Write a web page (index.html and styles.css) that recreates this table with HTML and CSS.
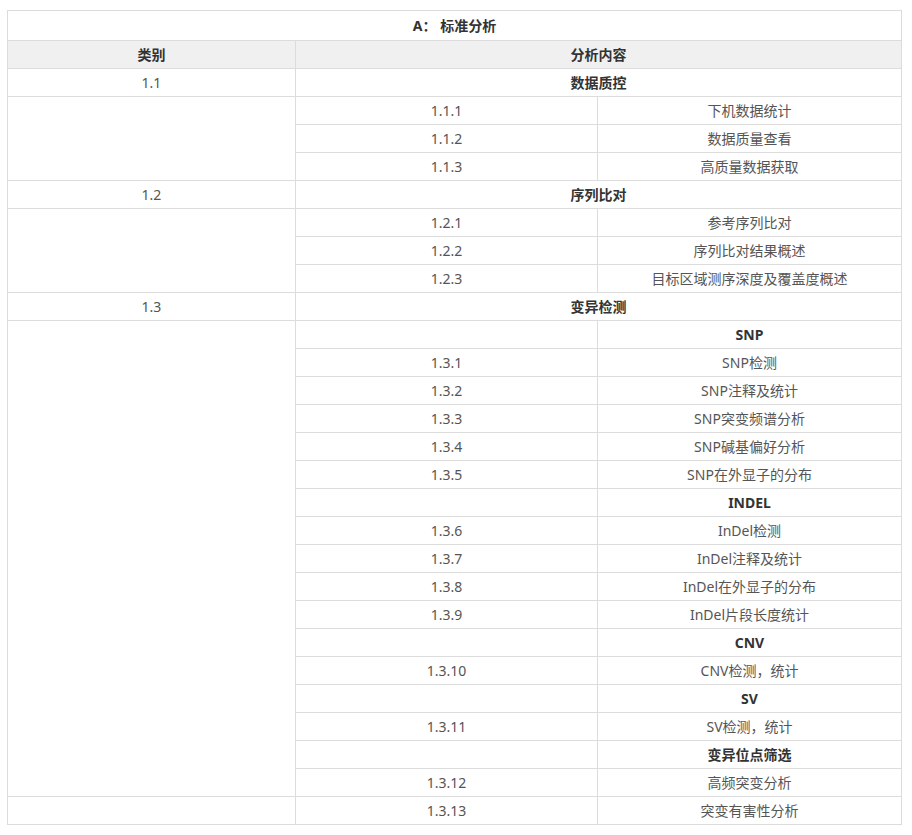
FILE: index.html
```html
<!DOCTYPE html>
<html lang="zh">
<head>
<meta charset="utf-8">
<link rel="stylesheet" href="styles.css">
</head>
<body>
<div class="wrap">
<table class="tbl">
  <colgroup>
    <col class="c1">
    <col class="c2">
    <col class="c3">
  </colgroup>
  <tr class="title"><td colspan="3" class="b">A：&nbsp;标准分析</td></tr>
  <tr class="head"><td class="b">类别</td><td colspan="2" class="b">分析内容</td></tr>

  <tr><td>1.1</td><td colspan="2" class="b">数据质控</td></tr>
  <tr><td rowspan="3"></td><td>1.1.1</td><td>下机数据统计</td></tr>
  <tr><td>1.1.2</td><td>数据质量查看</td></tr>
  <tr><td>1.1.3</td><td>高质量数据获取</td></tr>

  <tr><td>1.2</td><td colspan="2" class="b">序列比对</td></tr>
  <tr><td rowspan="3"></td><td>1.2.1</td><td>参考序列比对</td></tr>
  <tr><td>1.2.2</td><td>序列比对结果概述</td></tr>
  <tr><td>1.2.3</td><td>目标区域测序深度及覆盖度概述</td></tr>

  <tr><td>1.3</td><td colspan="2" class="b">变异检测</td></tr>
  <tr><td rowspan="17"></td><td></td><td class="b">SNP</td></tr>
  <tr><td>1.3.1</td><td>SNP检测</td></tr>
  <tr><td>1.3.2</td><td>SNP注释及统计</td></tr>
  <tr><td>1.3.3</td><td>SNP突变频谱分析</td></tr>
  <tr><td>1.3.4</td><td>SNP碱基偏好分析</td></tr>
  <tr><td>1.3.5</td><td>SNP在外显子的分布</td></tr>
  <tr><td></td><td class="b">INDEL</td></tr>
  <tr><td>1.3.6</td><td>InDel检测</td></tr>
  <tr><td>1.3.7</td><td>InDel注释及统计</td></tr>
  <tr><td>1.3.8</td><td>InDel在外显子的分布</td></tr>
  <tr><td>1.3.9</td><td>InDel片段长度统计</td></tr>
  <tr><td></td><td class="b">CNV</td></tr>
  <tr><td>1.3.10</td><td>CNV检测，统计</td></tr>
  <tr><td></td><td class="b">SV</td></tr>
  <tr><td>1.3.11</td><td>SV检测，统计</td></tr>
  <tr><td></td><td class="b">变异位点筛选</td></tr>
  <tr><td>1.3.12</td><td>高频突变分析</td></tr>
  <tr><td></td><td>1.3.13</td><td>突变有害性分析</td></tr>
</table>
</div>
</body>
</html>
```
FILE: styles.css
```css
html, body {
  margin: 0;
  padding: 0;
  background: #fff;
}
.wrap {
  padding: 10px 0 0 7px;
}
.tbl {
  border-collapse: collapse;
  table-layout: fixed;
  width: 895px;
  font-family: "Noto Sans", "Noto Sans CJK SC", sans-serif;
  font-size: 14px;
  color: #555;
}
.c1 { width: 288px; }
.c2 { width: 302px; }
.c3 { width: 304px; }
.tbl td {
  border: 1px solid #dcdcdc;
  padding: 1px 0 0;
  height: 26px;
  line-height: 26px;
  text-align: center;
  vertical-align: middle;
  white-space: nowrap;
}
.tbl .title td {
  height: 28px;
  line-height: 28px;
}
.tbl .head td {
  background: #f0f0f0;
}
.tbl td.b {
  font-weight: bold;
  color: #333;
}
```
